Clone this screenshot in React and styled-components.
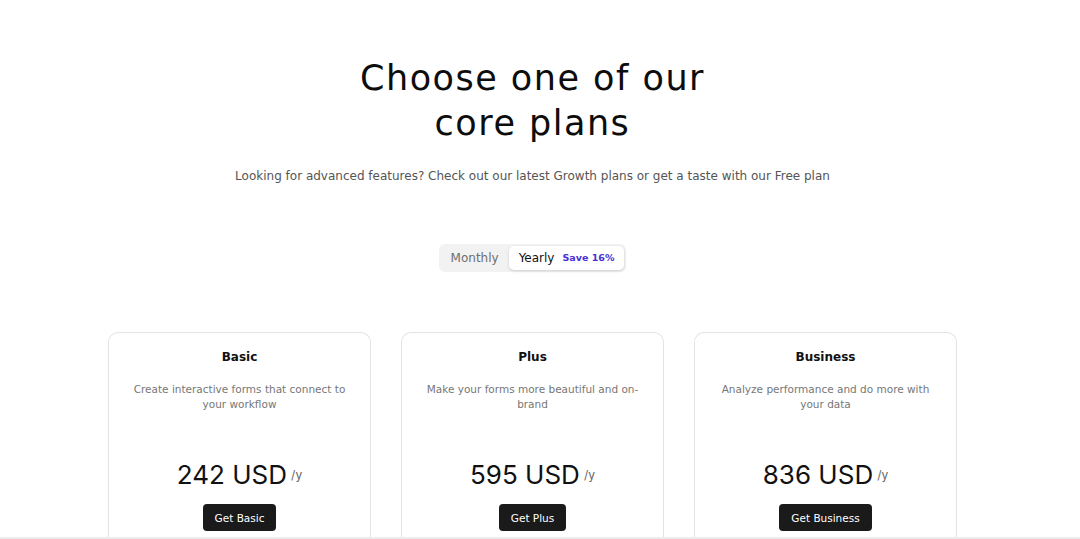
import React, { useState } from 'react'
import styled, { createGlobalStyle } from 'styled-components'

const GlobalStyle = createGlobalStyle`
  html, body {
    margin: 0;
    padding: 0;
    background: #ffffff;
  }
  body {
    font-family: "DejaVu Sans", "Open Sans", sans-serif;
    color: #111;
    overflow: hidden;
  }
`

const plans = [
  { name: 'Basic', desc: 'Create interactive forms that connect to your workflow', price: 242 },
  { name: 'Plus', desc: 'Make your forms more beautiful and on-brand', price: 595 },
  { name: 'Business', desc: 'Analyze performance and do more with your data', price: 836 }
]

const App = () => {
  const [period, setPeriod] = useState('yearly')
  return (
    <>
      <GlobalStyle />
      <Page>
        <Header>
          <Title>Choose one of our<br />core plans</Title>
          <Subtitle>
            Looking for advanced features? Check out our latest Growth plans or get a taste with our Free plan
          </Subtitle>
        </Header>
        <Toggle>
          <ToggleOption active={period === 'monthly'} onClick={() => setPeriod('monthly')}>
            Monthly
          </ToggleOption>
          <ToggleOption active={period === 'yearly'} onClick={() => setPeriod('yearly')}>
            Yearly <Save>Save 16%</Save>
          </ToggleOption>
        </Toggle>
        <Cards>
          {plans.map(p => (
            <Card key={p.name}>
              <PlanName>{p.name}</PlanName>
              <PlanDesc>{p.desc}</PlanDesc>
              <Price>
                {p.price} USD<Per>/y</Per>
              </Price>
              <BuyButton>Get {p.name}</BuyButton>
            </Card>
          ))}
        </Cards>
      </Page>
      <BottomBar />
    </>
  )
}

export default App

const Page = styled.div`
  width: 1065px;
  display: flex;
  flex-direction: column;
  align-items: center;
  padding-top: 56px;
`

const Header = styled.div`
  display: flex;
  flex-direction: column;
  align-items: center;
`

const Title = styled.h1`
  margin: 0;
  font-size: 35px;
  line-height: 45px;
  font-weight: 500;
  letter-spacing: 1.5px;
  text-align: center;
  color: #0d0d0d;
`

const Subtitle = styled.p`
  margin: 21px 0 0;
  font-size: 12px;
  line-height: 18px;
  color: #555;
`

const Toggle = styled.div`
  margin-top: 59px;
  display: flex;
  align-items: center;
  padding: 2px;
  background: #f2f2f2;
  border-radius: 6px;
`

const ToggleOption = styled.button`
  border: none;
  font-family: inherit;
  font-size: 12px;
  line-height: 24px;
  height: 24px;
  padding: 0 10px;
  border-radius: 5px;
  cursor: pointer;
  display: flex;
  align-items: center;
  background: ${p => (p.active ? '#fff' : 'transparent')};
  color: ${p => (p.active ? '#111' : '#6f6f6f')};
  box-shadow: ${p => (p.active ? '0 1px 3px rgba(0,0,0,0.15)' : 'none')};
`

const Save = styled.span`
  margin-left: 8px;
  font-size: 9.5px;
  font-weight: 700;
  color: #4a2fd6;
`

const Cards = styled.div`
  margin-top: 60px;
  display: grid;
  grid-template-columns: repeat(3, 263px);
  gap: 30px;
`

const Card = styled.div`
  border: 1px solid #e4e4e4;
  border-bottom: none;
  border-radius: 10px 10px 0 0;
  display: flex;
  flex-direction: column;
  align-items: center;
  padding: 16px 20px 30px;
  height: 200px;
`

const PlanName = styled.div`
  font-size: 12px;
  font-weight: 700;
  color: #111;
  line-height: 16px;
`

const PlanDesc = styled.div`
  margin-top: 17px;
  font-size: 10.5px;
  line-height: 15px;
  color: #777;
  text-align: center;
  height: 77px;
`

const Price = styled.div`
  font-family: Inter, Roboto, sans-serif;
  font-size: 26px;
  line-height: 32px;
  color: #111;
  display: flex;
  align-items: center;
`

const Per = styled.span`
  font-size: 12px;
  line-height: 16px;
  color: #666;
  margin-left: 4px;
`

const BuyButton = styled.button`
  margin-top: 13px;
  border: none;
  background: #1a1a1a;
  color: #fff;
  font-family: inherit;
  font-size: 10.5px;
  font-weight: 500;
  height: 27px;
  padding: 0 12px;
  border-radius: 4px;
  cursor: pointer;
`

const BottomBar = styled.div`
  position: fixed;
  left: 0;
  right: 0;
  bottom: 0;
  height: 2px;
  background: #ececec;
`
